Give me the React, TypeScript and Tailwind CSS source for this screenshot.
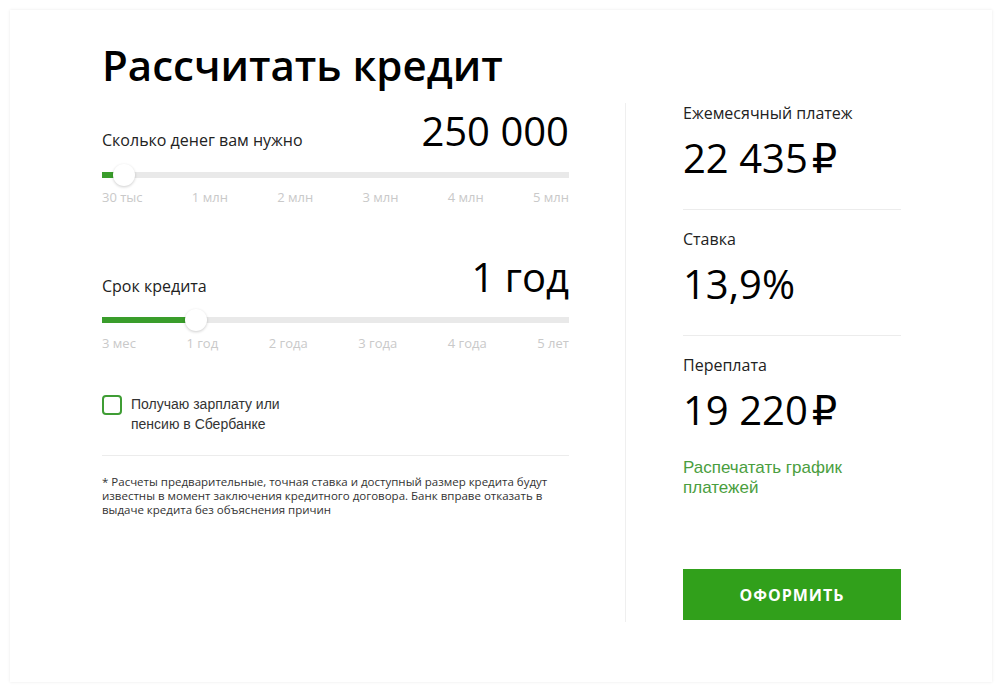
import React from "react";

const ticks1 = ["30 тыс", "1 млн", "2 млн", "3 млн", "4 млн", "5 млн"];
const ticks2 = ["3 мес", "1 год", "2 года", "3 года", "4 года", "5 лет"];

function Slider({ fill }: { fill: number }) {
  return (
    <div className="relative h-[20px]">
      <div className="absolute left-0 right-0 top-[7px] h-[6px] bg-[#e9e9e9]" />
      <div className="absolute left-0 top-[7px] h-[6px] bg-[#3a9d2b]" style={{ width: fill }} />
      <div
        className="absolute top-[-1px] h-[22px] w-[22px] rounded-full bg-white shadow-[0_1px_3px_rgba(0,0,0,0.2)]"
        style={{ left: fill - 11 }}
      />
    </div>
  );
}

function Ticks({ items }: { items: string[] }) {
  return (
    <div className="flex justify-between text-[13px] leading-[16px] text-[#c9c9c9]">
      {items.map((t) => (
        <span key={t}>{t}</span>
      ))}
    </div>
  );
}

function Stat({ label, value, rub, last }: { label: string; value: string; rub?: boolean; last?: boolean }) {
  return (
    <div>
      <div className="text-[16px] leading-[20px] text-[#222]">{label}</div>
      <div
        className="mt-[15px] text-[40px] leading-none text-black"
        style={{ fontFamily: '"Open Sans", "DejaVu Sans", sans-serif' }}
      >
        {value}
        {rub && <span className="ml-[4px]">₽</span>}
      </div>
      {!last && <div className="mt-[31px] mb-[19px] h-px bg-[#ececec]" />}
    </div>
  );
}

export default function App() {
  return (
    <div className="min-h-[692px] bg-white p-[10px]" style={{ fontFamily: '"Open Sans", "DejaVu Sans", sans-serif' }}>
      <div className="h-[672px] w-[982px] bg-white pl-[92px] pt-[34px] shadow-[0_0_3px_rgba(0,0,0,0.09)]">
        <h1 className="text-[42px] font-semibold leading-none text-black">Рассчитать кредит</h1>
        <div className="mt-[17px] flex items-start">
          <div className="w-[467px]">
            <div className="flex items-baseline justify-between pt-[8px]">
              <span className="text-[16px] text-[#222]">Сколько денег вам нужно</span>
              <span className="text-[40px] leading-none text-black">250 000</span>
            </div>
            <div className="mt-[13px]">
              <Slider fill={22} />
            </div>
            <div className="mt-[4px]">
              <Ticks items={ticks1} />
            </div>
            <div className="mt-[52px] flex items-baseline justify-between">
              <span className="text-[16px] text-[#222]">Срок кредита</span>
              <span className="text-[40px] leading-none text-black">1 год</span>
            </div>
            <div className="mt-[12px]">
              <Slider fill={94} />
            </div>
            <div className="mt-[5px]">
              <Ticks items={ticks2} />
            </div>
            <div className="mt-[43px] flex items-start">
              <div className="mt-[1px] h-[20px] w-[20px] shrink-0 rounded-[4px] border-2 border-[#3f9d34] bg-white" />
              <div
                className="ml-[9px] text-[14px] leading-[20px] text-[#333]"
                style={{ fontFamily: '"Liberation Sans", Arial, sans-serif' }}
              >
                Получаю зарплату или
                <br />
                пенсию в Сбербанке
              </div>
            </div>
            <div className="mt-[21px] h-px bg-[#ececec]" />
            <p className="mt-[19px] text-[11.5px] leading-[14px] text-[#333]">
              * Расчеты предварительные, точная ставка и доступный размер кредита будут известны в момент
              заключения кредитного договора. Банк вправе отказать в выдаче кредита без объяснения причин
            </p>
          </div>
          <div className="ml-[56px] h-[519px] w-px bg-[#efefef]" />
          <div className="ml-[57px] w-[218px]">
            <Stat label="Ежемесячный платеж" value="22 435" rub />
            <Stat label="Ставка" value="13,9%" />
            <Stat label="Переплата" value="19 220" rub last />
            <div
              className="mt-[28px] text-[17px] leading-[20px] text-[#4a9e3e]"
              style={{ fontFamily: '"Liberation Sans", Arial, sans-serif' }}
            >
              Распечатать график
              <br />
              платежей
            </div>
            <button className="mt-[71px] flex h-[51px] w-[218px] items-center justify-center bg-[#31a01b] text-[16px] font-bold tracking-[1px] text-white">
              ОФОРМИТЬ
            </button>
          </div>
        </div>
      </div>
    </div>
  );
}
